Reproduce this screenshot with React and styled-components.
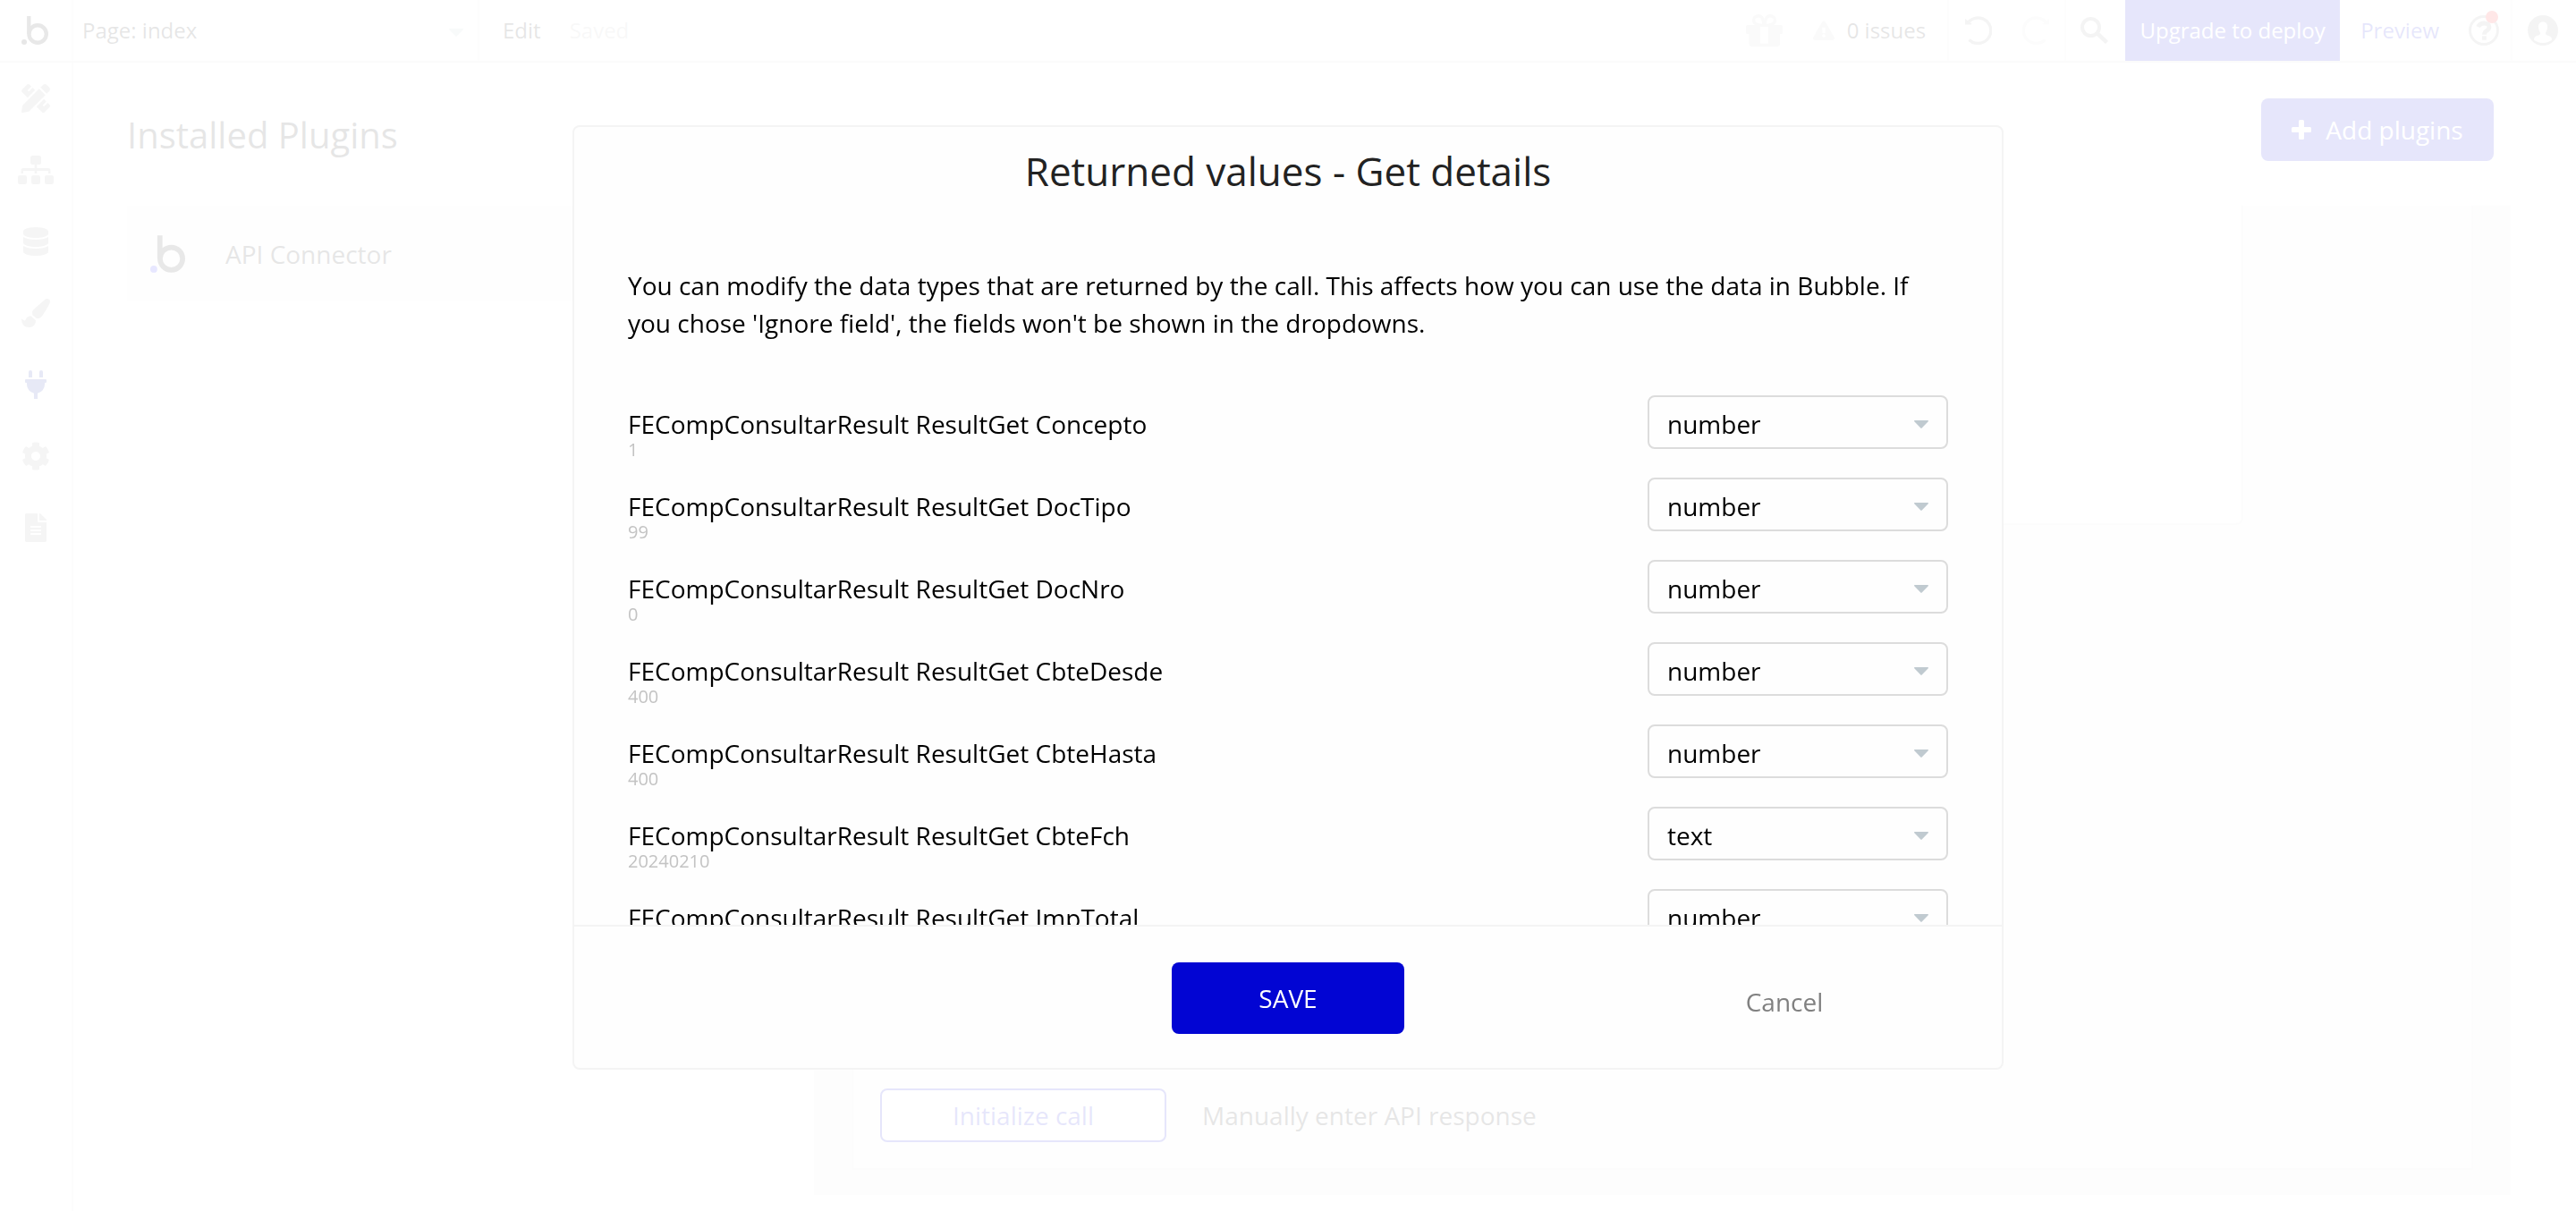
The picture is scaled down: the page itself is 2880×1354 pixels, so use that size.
import React from "react";
import styled, { createGlobalStyle } from "styled-components";
import {
  FaCog,
  FaDatabase,
  FaExclamationTriangle,
  FaFileAlt,
  FaPaintBrush,
  FaPencilRuler,
  FaPlug,
} from "react-icons/fa";

const GlobalStyle = createGlobalStyle`
  *, *::before, *::after { box-sizing: border-box; }
  html, body, #root { height: 100%; }
  body {
    margin: 0;
    overflow: hidden;
    background: #fff;
    color: #000;
    font-family: "Open Sans", "Noto Sans", sans-serif;
    font-size: 28px;
    line-height: 42px;
  }
  button, select {
    margin: 0;
    padding: 0;
    border: 0;
    background: none;
    color: inherit;
    font: inherit;
    cursor: pointer;
  }
  h1, h2, p { margin: 0; font-weight: 400; }
  svg { display: block; flex: none; }
`;

/* ---------- editor shell ---------- */

const Editor = styled.div`
  display: flex;
  flex-direction: column;
  height: 100vh;
`;

const TopBar = styled.header`
  display: flex;
  flex: none;
  height: 70px;
  border-bottom: 2px solid #d7d7d7;
  font-size: 24px;
  line-height: 36px;
`;

const Segment = styled.div`
  display: flex;
  align-items: center;
  gap: ${(p) => p.$gap || 0}px;
  padding: 0 ${(p) => p.$right || 0}px 0 ${(p) => p.$left || 0}px;
  border-right: ${(p) => (p.$divider ? "2px solid #e6e6e6" : "0")};
`;

const LogoSegment = styled(Segment)`
  width: 82px;
  padding-right: 2px;
  justify-content: center;
`;

const PagePicker = styled.div`
  position: relative;
  width: 454px;
  border-right: 2px solid #e6e6e6;
`;

const PageSelect = styled.select`
  appearance: none;
  width: 100%;
  height: 100%;
  padding: 0 48px 0 10px;
`;

const Caret = styled.svg`
  position: absolute;
  top: 50%;
  right: ${(p) => p.$right}px;
  margin-top: -2px;
  width: 16px;
  height: 9px;
  fill: ${(p) => p.$tint};
  pointer-events: none;
`;

const Spacer = styled.div`
  flex: 1;
`;

const BarButton = styled.button`
  display: flex;
  align-items: center;
  gap: 14px;
  color: ${(p) => p.$tint || "#000"};
`;

const SavedNote = styled.span`
  color: #b4b4b4;
`;

const UpgradeButton = styled.button`
  width: 240px;
  background: #0205d3;
  color: #fff;
`;

const HelpButton = styled.button`
  position: relative;
  color: #919191;
`;

const AlertDot = styled.span`
  position: absolute;
  top: -5px;
  right: 1px;
  width: 14px;
  height: 14px;
  border-radius: 50%;
  background: #ff0a0a;
`;

const Body = styled.div`
  display: flex;
  flex: 1;
  min-height: 0;
`;

const Sidebar = styled.nav`
  display: flex;
  flex-direction: column;
  width: 82px;
  border-right: 2px solid #e0e0e0;
`;

const SideLink = styled.a`
  display: flex;
  align-items: center;
  justify-content: center;
  height: 80px;
  color: ${(p) => (p.$active ? "#0f23a5" : "#9b9b9b")};

  svg {
    width: auto;
    height: 32px;
  }
`;

const Main = styled.main`
  display: flex;
  flex: 1;
  flex-direction: column;
  gap: 50px;
  padding: 40px 73px 18px 60px;
  background: #f9f9f9;
`;

const MainHead = styled.div`
  display: flex;
  align-items: center;
  justify-content: space-between;
  height: 70px;
  padding-right: 19px;
`;

const PageTitle = styled.h1`
  padding-top: 12px;
  font-size: 40px;
  line-height: 56px;
`;

const AddButton = styled.button`
  display: flex;
  align-items: center;
  justify-content: center;
  gap: 16px;
  width: 260px;
  height: 70px;
  border-radius: 8px;
  background: #0205d3;
  color: #fff;
`;

const Columns = styled.div`
  display: flex;
  flex: 1;
  align-items: stretch;
  gap: 62px;
`;

const PluginList = styled.div`
  width: 706px;
`;

const PluginRow = styled.button`
  display: flex;
  align-items: center;
  gap: 45px;
  width: 100%;
  height: 106px;
  padding: 2px 26px 0;
  background: #f0f0f0;
`;

const Detail = styled.section`
  flex: 1;
  padding: 0 42px 28px;
  background: #ebebeb;
`;

const CallPanel = styled.div`
  display: flex;
  flex-direction: column;
  justify-content: space-between;
  height: 100%;
  padding-bottom: 29px;
  border: 2px solid #e1e1e1;
  border-top: 0;
  background: #f0f0f0;
`;

const CallForm = styled.div`
  width: calc(100% - 255px);
  height: 357px;
  border: 2px solid #e1e1e1;
  border-top: 0;
  border-left: 0;
  border-radius: 0 0 8px 0;
  background: #f9f9f9;
`;

const CallActions = styled.div`
  display: flex;
  align-items: center;
  gap: 40px;
  padding-left: 30px;
`;

const InitButton = styled.button`
  width: 320px;
  height: 60px;
  border: 2px solid #0205d3;
  border-radius: 8px;
  background: #fff;
  color: #0205d3;
`;

/* ---------- dialog ---------- */

const Backdrop = styled.div`
  position: fixed;
  inset: 0;
  display: flex;
  align-items: flex-start;
  justify-content: center;
  padding: 140px 40px;
  background: rgba(255, 255, 255, 0.9);
`;

const Dialog = styled.div`
  display: flex;
  flex-direction: column;
  width: 100%;
  max-width: 1600px;
  height: calc(100vh - 298px);
  border: 2px solid #f4f4f4;
  border-radius: 8px;
  background: #fefefe;
`;

const DialogTitle = styled.h2`
  flex: none;
  padding-top: 17px;
  color: #222;
  font-size: 44px;
  line-height: 64px;
  text-align: center;
`;

const DialogBody = styled.div`
  flex: 1;
  min-height: 0;
  overflow-y: auto;
  scrollbar-width: none;
  padding: 75px 60px 0;
`;

const FieldList = styled.div`
  display: flex;
  flex-direction: column;
  gap: 32px;
  padding-top: 60px;
`;

const FieldRow = styled.div`
  display: flex;
  align-items: flex-start;
  justify-content: space-between;
  height: 60px;
`;

const FieldText = styled.div`
  padding-top: 11px;
`;

const FieldName = styled.label`
  display: block;
  line-height: 42px;
`;

const FieldSample = styled.div`
  margin-top: -6px;
  color: #c3c3c3;
  font-size: 20px;
  line-height: 28px;
`;

const TypePicker = styled.div`
  position: relative;
  width: 336px;
`;

const TypeSelect = styled.select`
  appearance: none;
  width: 100%;
  height: 60px;
  padding: 4px 48px 0 20px;
  border: 2px solid #dcdcdc;
  border-radius: 8px;
`;

const DialogFooter = styled.footer`
  display: grid;
  grid-template-columns: 1fr 260px 1fr;
  flex: none;
  align-items: center;
  height: 160px;
  padding-top: 2px;
  border-top: 2px solid #f4f4f4;
`;

const SaveButton = styled.button`
  grid-column: 2;
  height: 80px;
  border-radius: 8px;
  background: #0205d3;
  color: #fff;
`;

const CancelButton = styled.button`
  justify-self: end;
  width: 260px;
  height: 80px;
  margin-right: 113px;
  padding-top: 8px;
  color: #808080;
`;

/* ---------- drawings ---------- */

const Logo = ({ width, height, dot = "#0f0f0f" }) => (
  <svg width={width} height={height} viewBox="0 0 30 32" aria-hidden="true">
    <path d="M8.3 0v20" stroke="#1a1a1a" strokeWidth="4.4" fill="none" />
    <circle cx="18.1" cy="20" r="9.7" stroke="#1a1a1a" strokeWidth="4.4" fill="none" />
    <circle cx="3" cy="29" r="3" fill={dot} />
  </svg>
);

const SitemapIcon = () => (
  <svg viewBox="0 0 40 32" fill="currentColor" aria-hidden="true">
    <rect x="14" y="0" width="12" height="10" rx="2" />
    <rect x="0" y="22" width="10" height="10" rx="2" />
    <rect x="15" y="22" width="10" height="10" rx="2" />
    <rect x="30" y="22" width="10" height="10" rx="2" />
    <path d="M18.7 10H21.300V14H34Q36.500 14 36.500 16.500V20H34V17H21.300V20H18.700V17H6V20H3.500V16.500Q3.500 14 6 14H18.700Z" />
  </svg>
);

const GiftIcon = () => (
  <svg width="41" height="36" viewBox="0 0 41 36" aria-hidden="true">
    <g fill="none" stroke="#c8c8c8" strokeWidth="3.4">
      <path d="M20 12C14 13 8.500 10.500 8.500 6.500C8.500 3 12 1.700 14.500 1.700C18.500 1.700 20 8 20 12Z" />
      <path d="M21 12C27 13 32.500 10.500 32.500 6.500C32.500 3 29 1.700 26.500 1.700C22.500 1.700 21 8 21 12Z" />
    </g>
    <path
      fill="#c8c8c8"
      d="M1.500 12H16V32.500H25V12H39.500Q41 12 41 13.500V20.500Q41 22 39.500 22H38V33Q38 36 35 36H7Q3.500 36 3.500 33V22H1.500Q0 22 0 20.500V13.500Q0 12 1.500 12Z"
    />
  </svg>
);

const TurnIcon = ({ tint, flip }) => (
  <svg width="30" height="32" viewBox="0 0 30 32" aria-hidden="true">
    <g transform={flip ? "translate(30 0) scale(-1 1)" : undefined}>
      <path
        d="M4 6.500A14.300 14.300 0 1 1 4.500 26.500"
        fill="none"
        stroke={tint}
        strokeWidth="3.400"
      />
      <path d="M0 3L7.500 8.500L7 9.500H0Z" fill={tint} />
    </g>
  </svg>
);

const SearchIcon = () => (
  <svg width="31" height="30" viewBox="0 0 31 30" fill="none" stroke="#919191" aria-hidden="true">
    <circle cx="11.5" cy="11.500" r="9.500" strokeWidth="4" />
    <path d="M19 18.500L29.500 28.500" strokeWidth="4.500" />
  </svg>
);

const HelpIcon = () => (
  <svg width="34" height="34" viewBox="0 0 34 34" fill="none" stroke="currentColor" aria-hidden="true">
    <circle cx="17" cy="17" r="15.500" strokeWidth="3" />
    <path d="M10.500 13Q12.500 9 17.200 9Q23 9 23 13.200Q23 15.500 20.200 17.300Q17.500 18.900 17.500 21.700" strokeWidth="4.800" />
    <path d="M15 25.500H19.800" strokeWidth="4.500" />
  </svg>
);

const UserIcon = () => (
  <svg width="34" height="34" viewBox="0 0 34 34" aria-hidden="true">
    <circle cx="17" cy="17" r="17" fill="#919191" />
    <path
      fill="#fff"
      d="M17 7.500C20.500 7.500 22.300 10 22 13.500C21.800 16.500 20.500 18.500 20 19.500C19.800 22 21 22.300 23.500 23C26 23.800 27 25.500 27 27.500C24.500 29.800 21 31 17 31C13 31 9.500 29.800 7 27.500C7 25.500 8 23.800 10.500 23C13 22.300 14.200 22 14 19.500C13.500 18.500 12.200 16.500 12 13.500C11.700 10 13.500 7.500 17 7.500Z"
    />
  </svg>
);

const PlusIcon = () => (
  <svg width="22" height="22" viewBox="0 0 22 22" fill="#fff" aria-hidden="true">
    <rect x="8" y="0" width="6" height="22" rx="1.500" />
    <rect x="0" y="8" width="22" height="6" rx="1.500" />
  </svg>
);

const DownCaret = ({ right, tint }) => (
  <Caret $right={right} $tint={tint} viewBox="0 0 16 9" aria-hidden="true">
    <path d="M0.500 0H15.500Q16.300 0.700 15.500 1.500L8.700 8.600Q8 9.200 7.300 8.600L0.500 1.500Q-0.300 0.700 0.500 0Z" />
  </Caret>
);

/* ---------- data ---------- */

const tools = [
  { name: "Design", Icon: FaPencilRuler },
  { name: "Workflow", Icon: SitemapIcon },
  { name: "Data", Icon: FaDatabase },
  { name: "Styles", Icon: FaPaintBrush },
  { name: "Plugins", Icon: FaPlug, active: true },
  { name: "Settings", Icon: FaCog },
  { name: "Logs", Icon: FaFileAlt },
];

const fields = [
  { key: "Concepto", sample: "1", type: "number" },
  { key: "DocTipo", sample: "99", type: "number" },
  { key: "DocNro", sample: "0", type: "number" },
  { key: "CbteDesde", sample: "400", type: "number" },
  { key: "CbteHasta", sample: "400", type: "number" },
  { key: "CbteFch", sample: "20240210", type: "text" },
  { key: "ImpTotal", sample: "", type: "number" },
];

const ReturnedField = ({ field }) => (
  <FieldRow>
    <FieldText>
      <FieldName htmlFor={field.key}>FECompConsultarResult ResultGet {field.key}</FieldName>
      <FieldSample>{field.sample}</FieldSample>
    </FieldText>
    <TypePicker>
      <TypeSelect id={field.key} defaultValue={field.type}>
        <option>{field.type}</option>
      </TypeSelect>
      <DownCaret right={22} tint="#c0cad0" />
    </TypePicker>
  </FieldRow>
);

export default function App() {
  return (
    <>
      <GlobalStyle />
      <Editor>
        <TopBar>
          <LogoSegment $divider>
            <Logo width="30" height="32" />
          </LogoSegment>
          <PagePicker>
            <PageSelect aria-label="Page" defaultValue="Page: index">
              <option>Page: index</option>
            </PageSelect>
            <DownCaret right={16} tint="#b9c8ce" />
          </PagePicker>
          <Segment $left={26} $gap={32}>
            <BarButton>Edit</BarButton>
            <SavedNote>Saved</SavedNote>
          </Segment>
          <Spacer />
          <Segment $gap={34} $right={24} $divider>
            <BarButton aria-label="Gifts">
              <GiftIcon />
            </BarButton>
            <BarButton>
              <FaExclamationTriangle size={24} color="#c8c8c8" />
              0 issues
            </BarButton>
          </Segment>
          <Segment $left={18} $right={17} $gap={34} $divider>
            <button aria-label="Undo">
              <TurnIcon tint="#919191" />
            </button>
            <button aria-label="Redo">
              <TurnIcon tint="#dcdcdc" flip />
            </button>
          </Segment>
          <Segment $left={16} $right={19}>
            <button aria-label="Search">
              <SearchIcon />
            </button>
          </Segment>
          <UpgradeButton>Upgrade to deploy</UpgradeButton>
          <Segment $left={23} $right={13} $gap={33} $divider>
            <BarButton $tint="#0205d3">Preview</BarButton>
            <HelpButton aria-label="Help">
              <HelpIcon />
              <AlertDot />
            </HelpButton>
          </Segment>
          <Segment $left={17} $right={20}>
            <button aria-label="Account">
              <UserIcon />
            </button>
          </Segment>
        </TopBar>
        <Body>
          <Sidebar>
            {tools.map(({ name, Icon, active }) => (
              <SideLink key={name} href="#" aria-label={name} $active={active}>
                <Icon />
              </SideLink>
            ))}
          </Sidebar>
          <Main>
            <MainHead>
              <PageTitle>Installed Plugins</PageTitle>
              <AddButton>
                <PlusIcon />
                Add plugins
              </AddButton>
            </MainHead>
            <Columns>
              <PluginList>
                <PluginRow>
                  <Logo width="39" height="42" dot="#0a0aff" />
                  API Connector
                </PluginRow>
              </PluginList>
              <Detail>
                <CallPanel>
                  <CallForm />
                  <CallActions>
                    <InitButton>Initialize call</InitButton>
                    <BarButton>Manually enter API response</BarButton>
                  </CallActions>
                </CallPanel>
              </Detail>
            </Columns>
          </Main>
        </Body>
      </Editor>
      <Backdrop>
        <Dialog role="dialog" aria-labelledby="dialog-title">
          <DialogTitle id="dialog-title">Returned values - Get details</DialogTitle>
          <DialogBody>
            <p>
              You can modify the data types that are returned by the call. This affects how you can
              use the data in Bubble. If you chose 'Ignore field', the fields won't be shown in the
              dropdowns.
            </p>
            <FieldList>
              {fields.map((field) => (
                <ReturnedField key={field.key} field={field} />
              ))}
            </FieldList>
          </DialogBody>
          <DialogFooter>
            <SaveButton>SAVE</SaveButton>
            <CancelButton>Cancel</CancelButton>
          </DialogFooter>
        </Dialog>
      </Backdrop>
    </>
  );
}
